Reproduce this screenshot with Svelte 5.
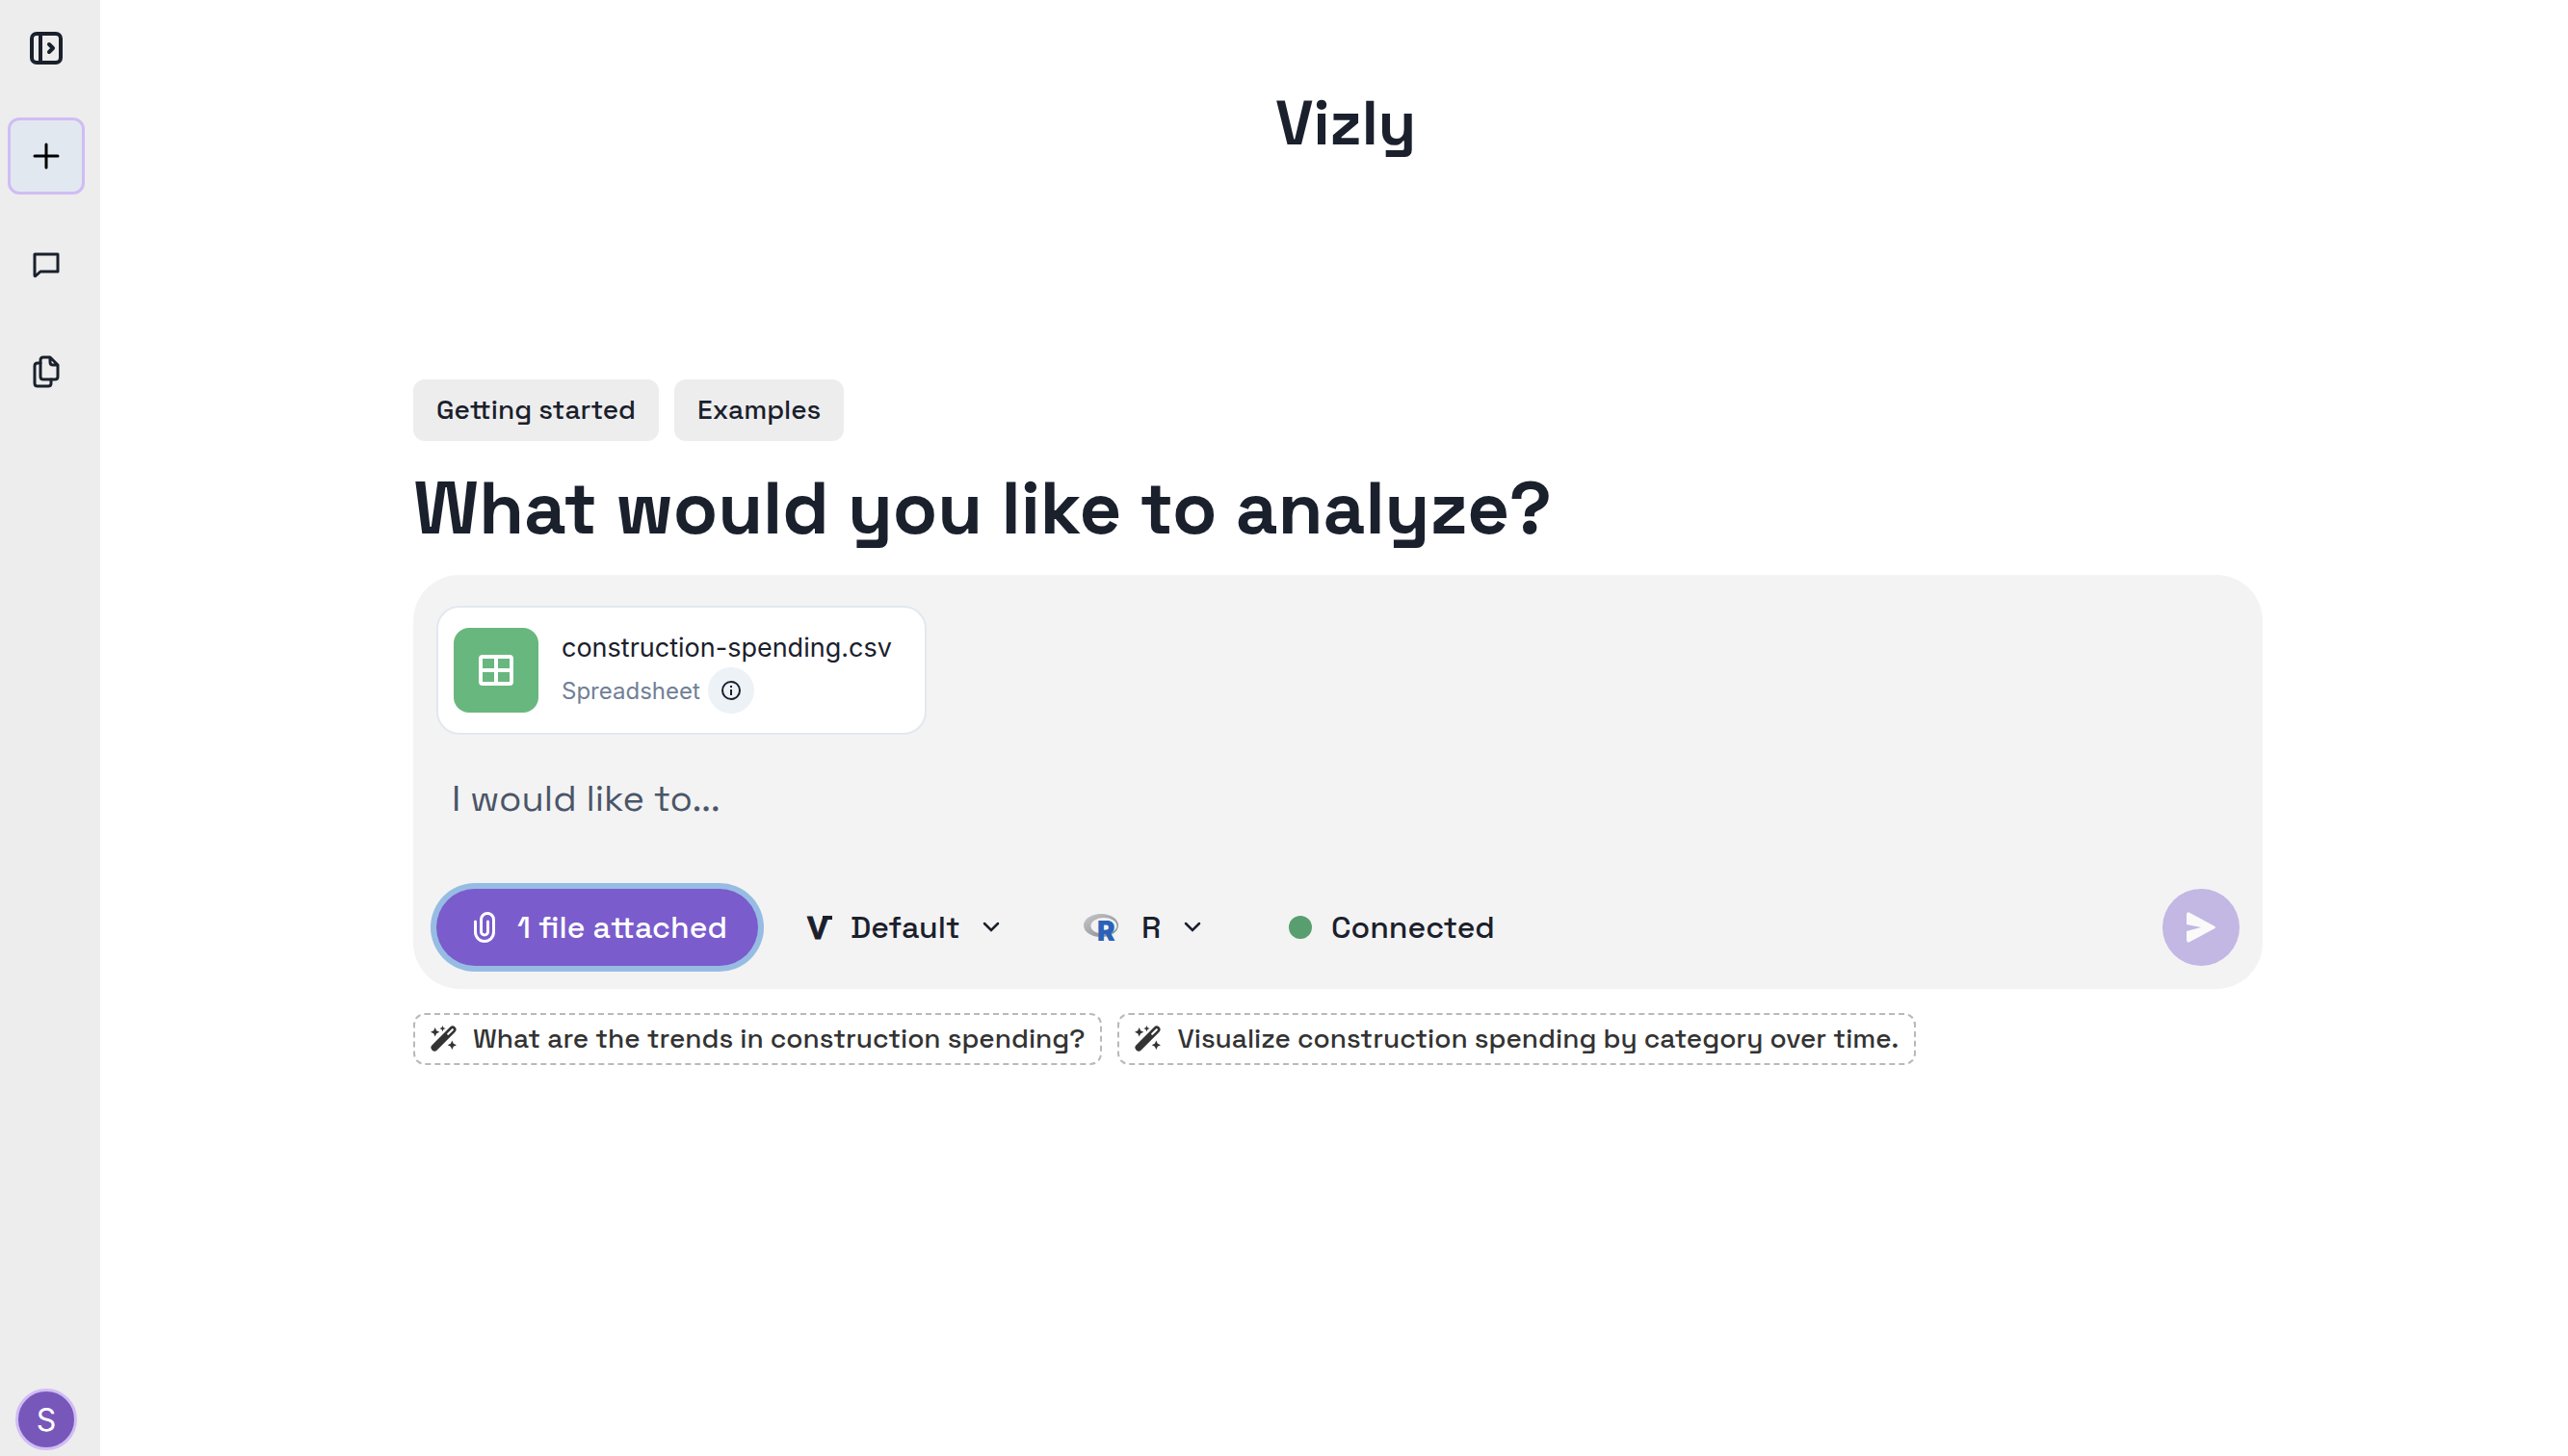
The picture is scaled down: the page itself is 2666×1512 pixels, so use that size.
<script lang="ts">
    let prompt = $state("");
    let model = $state("Default");
    let language = $state("R");

    const tabs = ["Getting started", "Examples"];
    const suggestions = [
        "What are the trends in construction spending?",
        "Visualize construction spending by category over time.",
    ];
</script>

{#snippet chevron()}
    <svg class="chevron" viewBox="0 0 16 10" aria-hidden="true">
        <path d="M1 1l7 7 7-7" />
    </svg>
{/snippet}

<div class="app">
    <nav class="sidebar" aria-label="Main">
        <button class="nav-btn" aria-label="Expand sidebar">
            <svg class="line panel" viewBox="0 0 34 34">
                <rect x="2" y="2" width="30" height="30" rx="5" />
                <path d="M11 2v30M20 13l4 4-4 4" />
            </svg>
        </button>
        <button class="nav-btn active" aria-label="New chat">
            <svg class="line" viewBox="0 0 28 28">
                <path d="M14 2v24M2 14h24" />
            </svg>
        </button>
        <button class="nav-btn" aria-label="Chats">
            <svg class="line" viewBox="0 0 28 28">
                <path d="M2 4h24v18H8l-5 4.500q-1 .5-1-.5z" />
            </svg>
        </button>
        <button class="nav-btn" aria-label="Files">
            <svg class="line" viewBox="0 0 28 34">
                <path d="M18 2h-7q-3 0-3 3v17q0 3 3 3h12q3 0 3-3V10zM18 2v5q0 3 3 3h5" />
                <path d="M8 8H5q-3 0-3 3v18q0 3 3 3h11q3 0 3-3v-4" />
            </svg>
        </button>
        <button class="avatar" aria-label="Account">S</button>
    </nav>

    <main>
        <header>Vizly</header>

        <section class="content">
            <div class="tabs">
                {#each tabs as tab}
                    <button class="tab">{tab}</button>
                {/each}
            </div>

            <h1>What would you like to analyze?</h1>

            <form class="composer" onsubmit={(e) => e.preventDefault()}>
                <div class="file">
                    <div class="file-icon">
                        <svg viewBox="0 0 36 32" aria-hidden="true">
                            <rect x="2" y="2" width="32" height="28" rx="2" />
                            <path d="M18 2v28M2 16h32" />
                        </svg>
                    </div>
                    <div class="file-text">
                        <span class="file-name">construction-spending.csv</span>
                        <div class="file-meta">
                            <span>Spreadsheet</span>
                            <button type="button" class="info" aria-label="File details">
                                <svg viewBox="0 0 20 20">
                                    <circle cx="10" cy="10" r="9" />
                                    <path d="M10 9v6M10 5v2" />
                                </svg>
                            </button>
                        </div>
                    </div>
                </div>

                <textarea rows="1" aria-label="Prompt" placeholder="I would like to..." bind:value={prompt}></textarea>

                <div class="toolbar">
                    <button type="button" class="attach">
                        <svg class="clip" viewBox="0 0 22 32" aria-hidden="true">
                            <path d="M1.500 10v11a9.500 9.500 0 0 0 19 0V8a6.500 6.500 0 0 0-13 0v12.500a3.500 3.500 0 0 0 7 0V10" />
                        </svg>
                        1 file attached
                    </button>

                    <label class="picker model">
                        <svg class="v-logo" viewBox="0 0 26 26" aria-hidden="true">
                            <text x="0" y="25">V</text>
                            <rect x="16" y="1" width="10" height="4" />
                        </svg>
                        <select aria-label="Model" bind:value={model}>
                            <option>Default</option>
                        </select>
                        {@render chevron()}
                    </label>

                    <label class="picker language">
                        <svg class="r-logo" viewBox="0 0 41 30" aria-hidden="true">
                            <defs>
                                <linearGradient id="ring" x2="1" y2="1">
                                    <stop offset="0" stop-color="#c8cacd" />
                                    <stop offset="1" stop-color="#838488" />
                                </linearGradient>
                            </defs>
                            <path
                                fill="url(#ring)"
                                fill-rule="evenodd"
                                d="M18 1a18 12 0 1 1 0 24a18 12 0 1 1 0-24zM21 5a13.500 8.500 0 1 0 0 17a13.500 8.500 0 1 0 0-17z"
                            />
                            <text x="14" y="29">R</text>
                        </svg>
                        <select aria-label="Language" bind:value={language}>
                            <option>R</option>
                        </select>
                        {@render chevron()}
                    </label>

                    <span class="status"><i></i>Connected</span>

                    <button class="send" aria-label="Send" disabled>
                        <svg viewBox="0 0 30 32">
                            <path d="M0 2.500Q.5-.5 3 .7l26 14q2 1.300 0 2.600l-26 14q-2.500 1.200-3-1.800V20l15-4-15-3z" />
                        </svg>
                    </button>
                </div>
            </form>

            <div class="suggestions">
                {#each suggestions as text}
                    <button class="chip">
                        <svg viewBox="0 0 26 26" aria-hidden="true">
                            <path class="wand" d="M4 22L22 4" />
                            <path class="slot" d="M17.500 8.500L22 4" />
                            <path
                                d="M4.500 2l1.400 3.100L9 6.500 5.900 7.900 4.500 11 3.100 7.900 0 6.500l3.100-1.400zM12 0l.9 2.100L15 3l-2.100.9L12 6l-.9-2.100L9 3l2.100-.9zM21.500 15l1.400 3.100 3.100 1.400-3.100 1.400L21.500 24l-1.400-3.100-3.100-1.400 3.100-1.400z"
                            />
                        </svg>
                        {text}
                    </button>
                {/each}
            </div>
        </section>
    </main>
</div>

<style>
    :global(body) {
        margin: 0;
        background: #fff;
    }

    .app {
        display: flex;
        min-height: 100vh;
        font-family: "Space Grotesk", Inter, sans-serif;
        font-size: 28px;
        color: #1a202c;
    }

    button,
    select,
    textarea {
        box-sizing: border-box;
        margin: 0;
        padding: 0;
        border: 0;
        background: none;
        font: inherit;
        color: inherit;
    }

    button {
        flex-shrink: 0;
        cursor: pointer;
    }

    svg {
        flex-shrink: 0;
        display: block;
        overflow: visible;
    }

    /* sidebar */
    .sidebar {
        box-sizing: border-box;
        flex-shrink: 0;
        display: flex;
        flex-direction: column;
        gap: 32px;
        width: 104px;
        padding: 10px 16px 6px 8px;
        background: #ededed;
    }

    .nav-btn,
    .avatar {
        display: grid;
        place-items: center;
    }

    .nav-btn {
        width: 80px;
        height: 80px;
        border-radius: 12px;
    }

    .active {
        border: 3px solid #d0bdf4;
        background: #e2e8f0;
        color: #000;
    }

    .line {
        width: 28px;
        fill: none;
        stroke: currentColor;
        stroke-width: 3;
        stroke-linecap: round;
        stroke-linejoin: round;
    }

    .panel {
        width: 34px;
        stroke-width: 4;
    }

    .avatar {
        width: 64px;
        height: 64px;
        margin: auto auto 0;
        border: 3px solid #d0bdf4;
        border-radius: 50%;
        background: #7857bb;
        font-family: Inter, sans-serif;
        font-size: 32px;
        color: #fff;
    }

    /* page */
    main {
        flex: 1;
        min-width: 0;
        padding: 88px 32px 0 40px;
    }

    header {
        padding-left: 16px;
        font-size: 64px;
        font-weight: 600;
        line-height: 80px;
        text-align: center;
    }

    .content {
        max-width: 1920px;
        margin: 226px auto 0;
    }

    .tabs,
    .suggestions {
        display: flex;
        flex-wrap: wrap;
        gap: 16px;
    }

    .tab {
        height: 64px;
        padding: 0 24px 2px;
        border-radius: 12px;
        background: #ededed;
        font-weight: 500;
    }

    h1 {
        margin: 24px 0;
        font-size: 76px;
        font-weight: 700;
        line-height: 91px;
    }

    .composer {
        box-sizing: border-box;
        display: flex;
        flex-direction: column;
        padding: 32px 24px 24px;
        border-radius: 48px;
        background: #f3f3f3;
    }

    .file {
        box-sizing: border-box;
        align-self: flex-start;
        display: flex;
        align-items: center;
        gap: 24px;
        height: 134px;
        padding: 0 34px 0 16px;
        border: 2px solid #e2e8f0;
        border-radius: 24px;
        background: #fff;
        font-family: Inter, sans-serif;
    }

    .file-icon {
        display: grid;
        place-items: center;
        width: 88px;
        height: 88px;
        border-radius: 16px;
        background: #68b77f;
    }

    .file-icon svg {
        width: 36px;
        fill: none;
        stroke: #fff;
        stroke-width: 4;
    }

    .file-text {
        padding-top: 2px;
    }

    .file-name {
        font-size: 27px;
        line-height: 40px;
    }

    .file-meta {
        display: flex;
        align-items: center;
        gap: 8px;
        font-size: 24px;
        color: #718096;
    }

    .info {
        display: grid;
        place-items: center;
        width: 48px;
        height: 48px;
        border-radius: 50%;
        background: #edf2f7;
        color: #1a202c;
    }

    .info svg {
        width: 20px;
        fill: none;
        stroke: currentColor;
        stroke-width: 2;
    }

    textarea {
        height: 128px;
        margin-top: 32px;
        padding: 10px 16px;
        font-size: 38px;
        line-height: 48px;
        resize: none;
        outline: 0;
    }

    textarea::placeholder {
        color: #4a5568;
        opacity: 1;
    }

    .toolbar {
        display: flex;
        align-items: center;
        font-size: 32px;
        font-weight: 500;
    }

    .attach {
        display: flex;
        align-items: center;
        gap: 23px;
        height: 80px;
        padding: 0 32px 0 39px;
        border-radius: 40px;
        background: #7a5ccc;
        box-shadow: 0 0 0 6px #97bce3;
        color: #fff;
    }

    .clip {
        width: 22px;
        fill: none;
        stroke: currentColor;
        stroke-width: 3;
        stroke-linecap: round;
    }

    .picker {
        display: flex;
        align-items: center;
        gap: 19px;
    }

    .model {
        margin-left: 51px;
    }

    .language {
        margin-left: 88px;
    }

    select {
        appearance: none;
    }

    .chevron {
        width: 16px;
        margin-left: 5px;
        fill: none;
        stroke: currentColor;
        stroke-width: 2.5;
        stroke-linecap: round;
        pointer-events: none;
    }

    .v-logo {
        width: 26px;
        fill: currentColor;
    }

    .v-logo text {
        font: 700 33px "Liberation Sans", sans-serif;
        stroke: currentColor;
        stroke-width: 1;
    }

    .r-logo {
        width: 41px;
    }

    .r-logo text {
        font: 900 28px Inter, sans-serif;
        fill: #2a62b8;
    }

    .status {
        display: flex;
        align-items: center;
        gap: 20px;
        margin-left: 92px;
    }

    .status i {
        width: 24px;
        height: 24px;
        border-radius: 50%;
        background: #589e6e;
    }

    .send {
        display: grid;
        place-items: center;
        width: 80px;
        height: 80px;
        margin-left: auto;
        border-radius: 50%;
        background: #c3b7e4;
        cursor: default;
    }

    .send svg {
        width: 30px;
        fill: #fafafa;
    }

    .suggestions {
        margin-top: 25px;
    }

    .chip {
        display: flex;
        align-items: center;
        gap: 17px;
        height: 54px;
        padding: 0 16px 2px;
        border: 2px dashed #b9b9b9;
        border-radius: 12px;
        font-weight: 500;
        color: #333;
    }

    .chip svg {
        width: 27px;
        fill: currentColor;
    }

    .wand {
        stroke: currentColor;
        stroke-width: 7;
        stroke-linecap: round;
    }

    .slot {
        stroke: #fff;
        stroke-width: 2;
        stroke-linecap: round;
    }
</style>
